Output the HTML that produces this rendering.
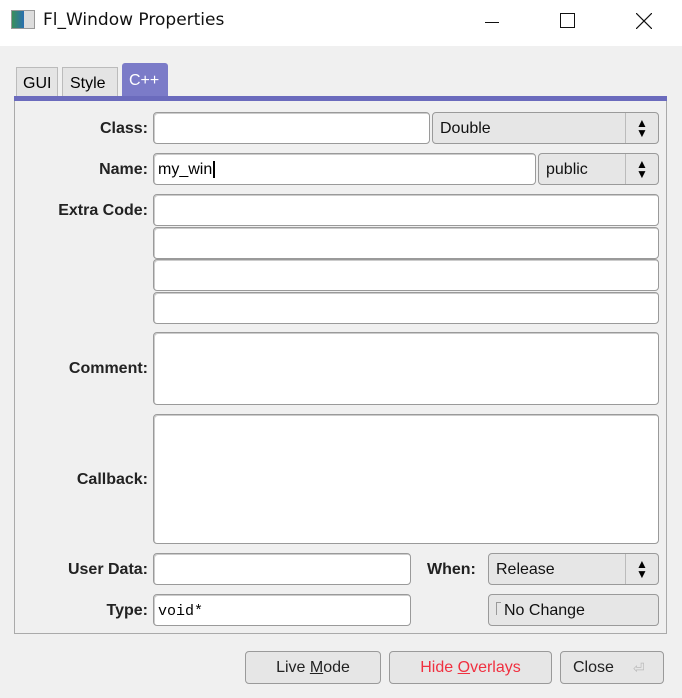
<!DOCTYPE html><html><head><style>
body{margin:0;width:682px;height:698px;background:#f0f0f0;font-family:"Liberation Sans",sans-serif;position:relative;overflow:hidden}
.a{position:absolute;box-sizing:border-box}
.in{position:absolute;box-sizing:border-box;background:#fff;border:1px solid #9a9a9a;border-radius:4px;box-shadow:inset 1px 1px 0 #ccc}
.ch{position:absolute;box-sizing:border-box;background:#e6e6e6;border:1px solid #9a9a9a;border-radius:4px;font-size:16px;padding:7px 0 0 7px;color:#111}
.lb{position:absolute;right:534px;font-weight:bold;font-size:16px;color:#222;text-align:right;white-space:nowrap}
.btn{position:absolute;box-sizing:border-box;background:#e6e6e6;border:1px solid #9a9a9a;border-radius:4px;font-size:16px;text-align:center;padding-top:7px;color:#222}
.ar{position:absolute;right:0;top:0;bottom:0;width:33px;border-left:1px solid #bbb;font-size:12px;line-height:10px;text-align:center;padding-top:5px;box-sizing:border-box;color:#000}
</style></head><body>
<div class="a" style="left:0;top:0;width:682px;height:46px;background:#fff"></div>
<div class="a" style="left:11px;top:10px;width:24px;height:19px;border:1px solid #999;background:linear-gradient(90deg,#3a8f5a 0,#2a6fb0 55%,#ddd 55%)"></div>
<div class="a" style="left:43px;top:10px;color:#111;font-family:'DejaVu Sans','Liberation Sans',sans-serif;font-size:17px">Fl_Window Properties</div>
<div class="a" style="left:485px;top:22px;width:14px;height:1px;background:#111"></div>
<div class="a" style="left:560px;top:13px;width:15px;height:15px;border:1px solid #111"></div>
<svg class="a" style="left:636px;top:13px" width="16" height="16"><path d="M0 0L16 16M16 0L0 16" stroke="#111" stroke-width="1.2"/></svg>
<div class="a" style="left:16px;top:67px;width:42px;height:30px;background:#e4e4e4;border:1px solid #bbb;border-bottom:0;font-size:16px;padding:7px 0 0 6px">GUI</div>
<div class="a" style="left:62px;top:67px;width:56px;height:30px;background:#e4e4e4;border:1px solid #bbb;border-bottom:0;font-size:16px;padding:7px 0 0 7px">Style</div>
<div class="a" style="left:122px;top:63px;width:46px;height:34px;background:#7b7bc8;border-radius:3px 3px 0 0;color:#fff;font-size:16px;padding:9px 0 0 7px">C++</div>
<div class="a" style="left:14px;top:96px;width:653px;height:5px;background:#6b6bbd"></div>
<div class="a" style="left:14px;top:101px;width:653px;height:533px;border:1px solid #aaa;border-top:0"></div>

<div class="lb" style="top:120px">Class:</div>
<div class="in" style="left:153px;top:112px;width:277px;height:32px"></div>
<div class="ch" style="left:432px;top:112px;width:227px;height:32px">Double<div class="ar">▲<br>▼</div></div>
<div class="lb" style="top:161px">Name:</div>
<div class="in" style="left:153px;top:153px;width:383px;height:32px;font-size:16px;padding:7px 0 0 4px">my_win<span style="border-left:2px solid #000;margin-left:1px"></span></div>
<div class="ch" style="left:538px;top:153px;width:121px;height:32px">public<div class="ar">▲<br>▼</div></div>
<div class="lb" style="top:202px">Extra Code:</div>
<div class="in" style="left:153px;top:194px;width:506px;height:32px"></div>
<div class="in" style="left:153px;top:227px;width:506px;height:32px"></div>
<div class="in" style="left:153px;top:259px;width:506px;height:32px"></div>
<div class="in" style="left:153px;top:292px;width:506px;height:32px"></div>
<div class="lb" style="top:360px">Comment:</div>
<div class="in" style="left:153px;top:332px;width:506px;height:73px"></div>
<div class="lb" style="top:471px">Callback:</div>
<div class="in" style="left:153px;top:414px;width:506px;height:130px"></div>
<div class="lb" style="top:561px">User Data:</div>
<div class="in" style="left:153px;top:553px;width:258px;height:32px"></div>
<div class="a" style="left:427px;top:561px;font-weight:bold;font-size:16px;color:#222">When:</div>
<div class="ch" style="left:488px;top:553px;width:171px;height:32px">Release<div class="ar">▲<br>▼</div></div>
<div class="lb" style="top:602px">Type:</div>
<div class="in" style="left:153px;top:594px;width:258px;height:32px;font-family:'Liberation Mono',monospace;font-size:15px;padding:8px 0 0 4px">void*</div>
<div class="ch" style="left:488px;top:594px;width:171px;height:32px"><span style="display:inline-block;width:4px;height:12px;border-left:1px solid #999;border-top:1px solid #999;margin-right:3px"></span>No Change</div>

<div class="btn" style="left:245px;top:651px;width:136px;height:33px">Live <u>M</u>ode</div>
<div class="btn" style="left:389px;top:651px;width:163px;height:33px;color:#f03040">Hide <u>O</u>verlays</div>
<div class="btn" style="left:560px;top:651px;width:104px;height:33px;text-align:left;padding-left:12px">Close<span style="position:absolute;left:72px;top:8px;color:#bbb;font-size:14px">⏎</span></div>
</body></html>
